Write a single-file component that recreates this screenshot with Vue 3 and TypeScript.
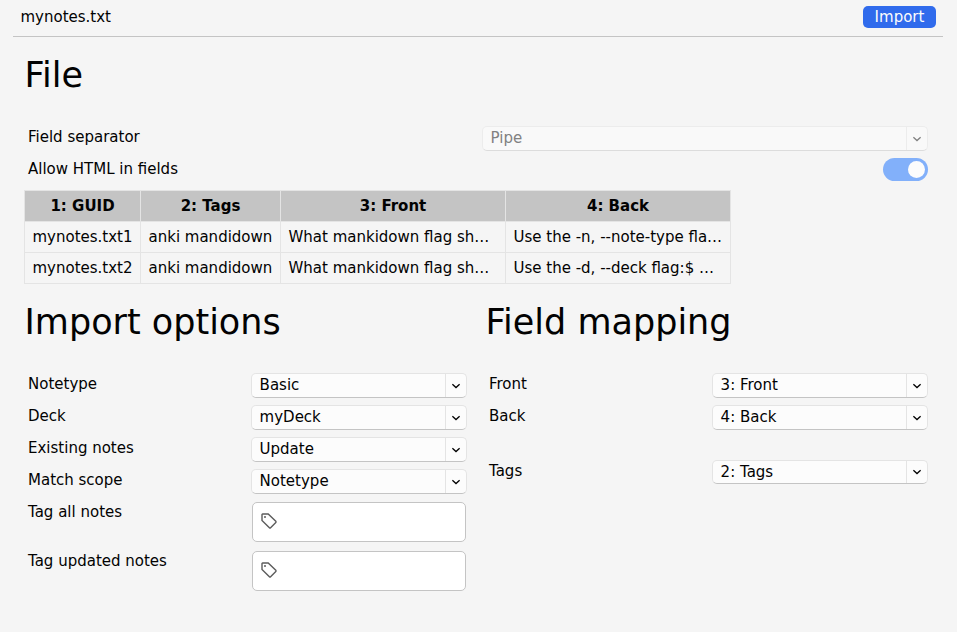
<script setup lang="ts">
import { ref } from 'vue'

interface SelectRow {
  label: string
  value: string
}

const fileName = ref('mynotes.txt')

const columns: string[] = ['1: GUID', '2: Tags', '3: Front', '4: Back']
const rows: string[][] = [
  ['mynotes.txt1', 'anki mandidown', 'What mankidown flag sh…', 'Use the -n, --note-type fla…'],
  ['mynotes.txt2', 'anki mandidown', 'What mankidown flag sh…', 'Use the -d, --deck flag:$ …'],
]

const options: SelectRow[] = [
  { label: 'Notetype', value: 'Basic' },
  { label: 'Deck', value: 'myDeck' },
  { label: 'Existing notes', value: 'Update' },
  { label: 'Match scope', value: 'Notetype' },
]
const tagInputs: string[] = ['Tag all notes', 'Tag updated notes']

const fieldMapping: SelectRow[] = [
  { label: 'Front', value: '3: Front' },
  { label: 'Back', value: '4: Back' },
]
const tagMapping: SelectRow = { label: 'Tags', value: '2: Tags' }
</script>

<template>
  <div class="page">
    <header class="topbar">
      <span class="filename">{{ fileName }}</span>
      <button class="import" type="button">Import</button>
    </header>

    <main class="content">
      <section class="file">
        <h1>File</h1>
        <div class="row wide">
          <span class="label">Field separator</span>
          <div class="select disabled">
            <span class="value">Pipe</span>
            <span class="arrow"><svg width="10" height="6" viewBox="0 0 10 6"><path d="M1.4 1.2 5 4.5 8.6 1.2" /></svg></span>
          </div>
        </div>
        <div class="row wide">
          <span class="label">Allow HTML in fields</span>
          <div class="switch"><span class="knob"></span></div>
        </div>
        <table class="preview">
          <thead>
            <tr>
              <th v-for="c in columns" :key="c">{{ c }}</th>
            </tr>
          </thead>
          <tbody>
            <tr v-for="r in rows" :key="r[0]">
              <td v-for="(cell, i) in r" :key="i">{{ cell }}</td>
            </tr>
          </tbody>
        </table>
      </section>

      <div class="columns">
        <section>
          <h1>Import options</h1>
          <div v-for="o in options" :key="o.label" class="row">
            <span class="label">{{ o.label }}</span>
            <div class="select">
              <span class="value">{{ o.value }}</span>
              <span class="arrow"><svg width="10" height="6" viewBox="0 0 10 6"><path d="M1.4 1.2 5 4.5 8.6 1.2" /></svg></span>
            </div>
          </div>
          <div v-for="t in tagInputs" :key="t" class="row tag-row">
            <span class="label">{{ t }}</span>
            <div class="tag-box">
              <svg width="18" height="18" viewBox="0 0 18 18">
                <path class="outline" d="M2 2.6Q2 2 2.6 2H8.2L15.8 9.2Q16.4 9.9 15.8 10.5L10.6 15.7Q10 16.3 9.4 15.7L2 8.4Z" />
                <circle cx="5" cy="5" r="1" />
              </svg>
            </div>
          </div>
        </section>

        <section>
          <h1>Field mapping</h1>
          <div v-for="m in fieldMapping" :key="m.label" class="row">
            <span class="label">{{ m.label }}</span>
            <div class="select">
              <span class="value">{{ m.value }}</span>
              <span class="arrow"><svg width="10" height="6" viewBox="0 0 10 6"><path d="M1.4 1.2 5 4.5 8.6 1.2" /></svg></span>
            </div>
          </div>
          <div class="row tags-mapping">
            <span class="label">{{ tagMapping.label }}</span>
            <div class="select short">
              <span class="value">{{ tagMapping.value }}</span>
              <span class="arrow"><svg width="10" height="6" viewBox="0 0 10 6"><path d="M1.4 1.2 5 4.5 8.6 1.2" /></svg></span>
            </div>
          </div>
        </section>
      </div>
    </main>
  </div>
</template>

<style>
body {
  margin: 0;
  background: #f5f5f5;
}
</style>

<style scoped>
.page {
  box-sizing: border-box;
  height: 632px;
  overflow: hidden;
  padding: 0 14px 0 13px;
  background: #f5f5f5;
  color: #020202;
  font-family: 'DejaVu Sans', sans-serif;
  font-size: 15px;
  line-height: 18px;
}
.topbar {
  box-sizing: border-box;
  display: flex;
  justify-content: space-between;
  align-items: flex-start;
  height: 37px;
  padding: 6px 7px 0 7.5px;
  border-bottom: 1px solid #c4c4c4;
}
.filename {
  line-height: 22px;
}
.import {
  width: 73px;
  height: 22px;
  padding: 0;
  border: 0;
  border-radius: 5px;
  background: #306bec;
  color: #fcfcfc;
  font: inherit;
  line-height: 22px;
}
.content {
  padding: 0 2px 0 11px;
}
h1 {
  margin: 0;
  height: 85px;
  padding: 17px 0 0 0.5px;
  box-sizing: border-box;
  font-size: 35px;
  font-weight: 400;
  line-height: 42px;
}
.file {
  height: 247px;
}
.row {
  display: grid;
  grid-template-columns: 223px 216px;
  column-gap: 4px;
  height: 32px;
  align-items: start;
}
.row.wide {
  grid-template-columns: 454px 446px;
}
.row.wide .switch {
  justify-self: end;
}
.label {
  padding: 6px 0 0 4px;
}
.select {
  box-sizing: border-box;
  display: flex;
  height: 25px;
  margin-top: 4px;
  border: 1px solid #e4e4e4;
  border-bottom-color: #c4c4c4;
  border-radius: 5px;
  background: #fcfcfc;
}
.select.short {
  height: 24px;
}
.select .value {
  flex: 1;
  padding-left: 7.6px;
  line-height: 22px;
}
.arrow {
  display: flex;
  align-items: center;
  justify-content: center;
  width: 20px;
  border-left: 1px solid #e4e4e4;
}
.arrow svg {
  margin-top: 1px;
  fill: none;
  stroke: #020202;
  stroke-width: 1.3;
}
.short .arrow svg {
  margin-top: 0;
}
.disabled {
  border-color: #ececec;
  border-bottom-color: #dcdcdc;
  background: #f9f9f9;
  color: #818181;
}
.disabled .arrow {
  border-color: #ececec;
}
.disabled .arrow svg {
  stroke: #818181;
}
.switch {
  box-sizing: border-box;
  display: flex;
  justify-content: flex-end;
  align-items: center;
  width: 45px;
  height: 23px;
  margin-top: 4px;
  padding-right: 3px;
  border-radius: 12px;
  background: #82b0fa;
}
.knob {
  width: 17px;
  height: 17px;
  border-radius: 50%;
  background: #fcfcfc;
}
.preview {
  width: 707px;
  margin-top: 4px;
  border-collapse: collapse;
  table-layout: fixed;
}
.preview th,
.preview td {
  box-sizing: border-box;
  height: 31px;
  padding: 0 0 0 7.5px;
  border: 1px solid #e4e4e4;
  text-align: left;
  white-space: nowrap;
}
.preview th {
  padding: 0;
  background: #c4c4c4;
  text-align: center;
}
.preview th:nth-child(1) {
  width: 116px;
}
.preview th:nth-child(2) {
  width: 140px;
}
.preview th:nth-child(3),
.preview th:nth-child(4) {
  width: 225px;
}
.columns {
  display: grid;
  grid-template-columns: 443px 443px;
  column-gap: 18px;
}
.tag-row {
  height: 49px;
}
.tag-box {
  box-sizing: border-box;
  height: 40px;
  margin: 5px 1px 0;
  padding: 9px 0 0 7px;
  border: 1px solid #c4c4c4;
  border-radius: 5px;
  background: #fff;
}
.tag-box svg {
  display: block;
}
.outline {
  fill: none;
  stroke: #5c5c5c;
  stroke-width: 1.4;
}
.tag-box circle {
  fill: #5c5c5c;
}
.tags-mapping {
  margin-top: 23px;
}
</style>
